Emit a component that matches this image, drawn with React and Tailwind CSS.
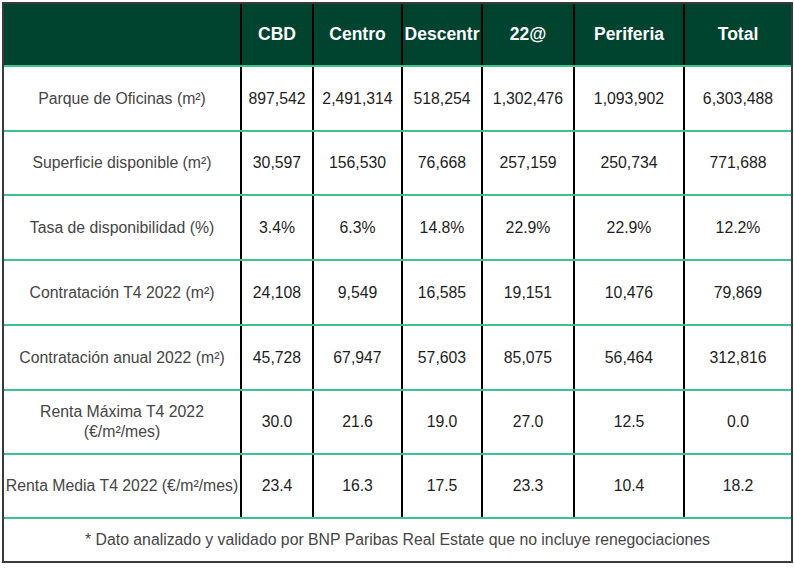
import React from "react";

const cols = ["CBD", "Centro", "Descentr", "22@", "Periferia", "Total"];

const rows = [
  { label: "Parque de Oficinas (m²)", values: ["897,542", "2,491,314", "518,254", "1,302,476", "1,093,902", "6,303,488"], h: "h-[65px]" },
  { label: "Superficie disponible (m²)", values: ["30,597", "156,530", "76,668", "257,159", "250,734", "771,688"], h: "h-[64px]" },
  { label: "Tasa de disponibilidad (%)", values: ["3.4%", "6.3%", "14.8%", "22.9%", "22.9%", "12.2%"], h: "h-[65px]" },
  { label: "Contratación T4 2022 (m²)", values: ["24,108", "9,549", "16,585", "19,151", "10,476", "79,869"], h: "h-[65px]" },
  { label: "Contratación anual 2022 (m²)", values: ["45,728", "67,947", "57,603", "85,075", "56,464", "312,816"], h: "h-[65px]" },
  { label: "Renta Máxima T4 2022\n(€/m²/mes)", values: ["30.0", "21.6", "19.0", "27.0", "12.5", "0.0"], h: "h-[64px]" },
  { label: "Renta Media T4 2022 (€/m²/mes)", values: ["23.4", "16.3", "17.5", "23.3", "10.4", "18.2"], h: "h-[64px]" },
];

const grid = "grid grid-cols-[238px_72px_89px_80px_92px_110px_1fr]";

const App = () => {
  return (
    <div className="w-[794px] h-[571px] bg-white pt-[2px] pl-[2px] font-['Liberation_Sans',Arial,sans-serif]">
      <div className="w-[791px] h-[561px] border-2 border-[#3a3a3a] flex flex-col">
        {/* header */}
        <div className={`${grid} h-[63px] bg-[#00432f] border-b-2 border-[#3cc48c]`}>
          <div className="border-r-2 border-black" />
          {cols.map((c, i) => (
            <div
              key={c}
              className={`flex items-center justify-center text-white font-bold text-[17.5px] ${i < cols.length - 1 ? "border-r-2 border-black" : ""}`}
            >
              {c}
            </div>
          ))}
        </div>
        {rows.map((r) => (
          <div key={r.label} className={`${grid} ${r.h} border-b-2 border-[#3cc48c]`}>
            <div className="flex items-center justify-center text-center whitespace-pre-line text-[15.8px] leading-[20px] text-[#454545] border-r-2 border-black">
              {r.label}
            </div>
            {r.values.map((v, i) => (
              <div
                key={i}
                className={`flex items-center justify-center text-[15.8px] text-[#1e1e1e] ${i < r.values.length - 1 ? "border-r-2 border-black" : ""}`}
              >
                {v}
              </div>
            ))}
          </div>
        ))}
        <div className="flex-1 flex items-center justify-center text-[15.8px] text-[#454545]">
          * Dato analizado y validado por BNP Paribas Real Estate que no incluye renegociaciones
        </div>
      </div>
    </div>
  );
};

export default App;
